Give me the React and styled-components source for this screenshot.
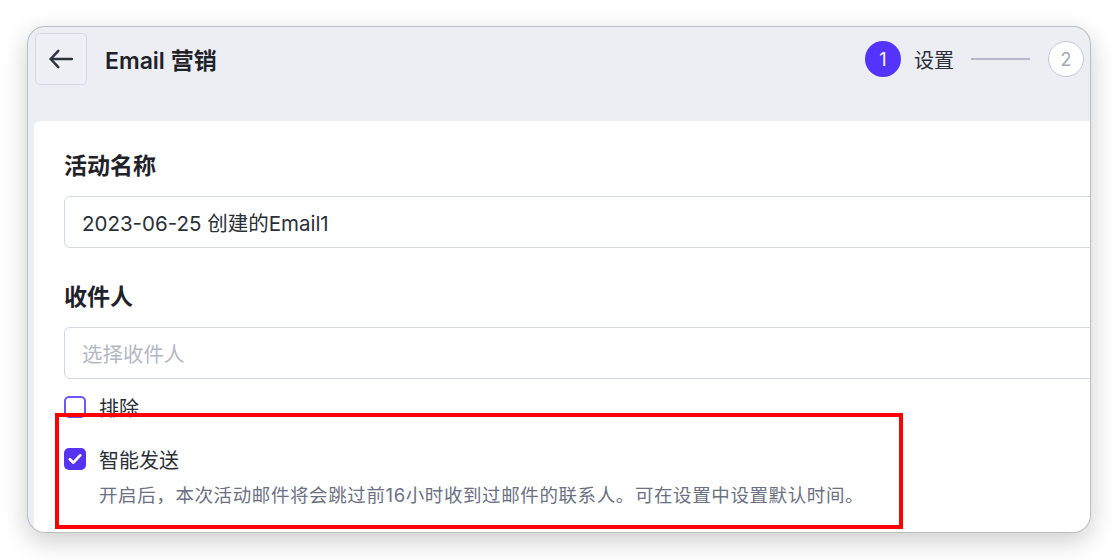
import React from 'react'
import styled, { createGlobalStyle } from 'styled-components'

const GlobalStyle = createGlobalStyle`
  html, body {
    margin: 0;
    padding: 0;
    background: #ffffff;
  }
  body {
    font-family: "Inter", "Noto Sans CJK SC", sans-serif;
    color: #1f2329;
  }
`

const Page = styled.div`
  position: relative;
  width: 1118px;
  height: 560px;
  padding: 26px 27px;
  box-sizing: border-box;
`

const Window = styled.div`
  width: 1064px;
  height: 507px;
  border-radius: 18px;
  overflow: hidden;
  background: #eceef3;
  border: 1px solid rgba(0, 0, 0, 0.2);
  box-sizing: border-box;
  box-shadow: 0 8px 26px rgba(0, 0, 0, 0.2);
  display: flex;
  flex-direction: column;
`

const Header = styled.header`
  height: 94px;
  flex-shrink: 0;
  display: flex;
  align-items: flex-start;
  padding: 6px 6px 0 7px;
  box-sizing: border-box;
`

const HeaderRow = styled.div`
  flex: 1;
  height: 52px;
  display: flex;
  align-items: center;
`

const BackButton = styled.button`
  width: 52px;
  height: 52px;
  border: 1px solid #d5d9e4;
  border-radius: 5px;
  background: #eef0f5;
  display: flex;
  align-items: center;
  justify-content: center;
  padding: 0;
  cursor: pointer;
`

const Title = styled.h1`
  margin: 0 0 0 18px;
  font-size: 23px;
  font-weight: 600;
  color: #1f2329;
  flex: 1;
`

const Steps = styled.div`
  display: flex;
  align-items: center;
`

const StepCircle = styled.div`
  width: 36px;
  height: 36px;
  border-radius: 50%;
  box-sizing: border-box;
  display: flex;
  align-items: center;
  justify-content: center;
  font-size: 18px;
  background: ${p => (p.$active ? '#5533ff' : '#ffffff')};
  color: ${p => (p.$active ? '#ffffff' : '#a3a8b8')};
  border: ${p => (p.$active ? 'none' : '1.5px solid #c3c7d4')};
`

const StepLabel = styled.span`
  margin-left: 13px;
  font-size: 20px;
  color: #2a2e36;
`

const StepLine = styled.div`
  width: 59px;
  height: 1.5px;
  background: #b6bac8;
  margin: 0 18px 0 17px;
`

const Card = styled.main`
  flex: 1;
  margin-left: 6px;
  width: 1100px;
  background: #ffffff;
  border-top-left-radius: 6px;
  padding: 30px 0 0 30px;
  box-sizing: border-box;
`

const Field = styled.div`
  margin-bottom: 34px;
`

const Label = styled.div`
  font-size: 23px;
  line-height: 30px;
  font-weight: 700;
  color: #1f2329;
  margin-bottom: 15px;
`

const Input = styled.div`
  height: 52px;
  border: 1px solid #d3d7e2;
  border-radius: 6px;
  box-sizing: border-box;
  display: flex;
  align-items: center;
  padding-left: 17px;
  font-size: 20.5px;
  color: ${p => (p.$placeholder ? '#b2b7c6' : '#2b2f38')};
`

const Fields = styled.div`
  & > ${Field}:last-child {
    margin-bottom: 0;
  }
`

const CheckRow = styled.label`
  display: flex;
  align-items: center;
  height: 30px;
  margin-top: ${p => p.$top}px;
  font-size: 20px;
  color: #2b2f38;
`

const Box = styled.span`
  width: 22px;
  height: 22px;
  border-radius: 5px;
  box-sizing: border-box;
  margin-right: 13px;
  display: flex;
  align-items: center;
  justify-content: center;
  background: ${p => (p.$checked ? '#5533f0' : '#ffffff')};
  border: ${p => (p.$checked ? 'none' : '2px solid #6f55ff')};
`

const Hint = styled.p`
  margin: 8px 0 0 35px;
  font-size: 18.5px;
  line-height: 26px;
  letter-spacing: 0.6px;
  color: #6b7182;
`

const Highlight = styled.div`
  position: absolute;
  left: 55px;
  top: 413px;
  width: 848px;
  height: 116px;
  border: 4px solid #ff0000;
  box-sizing: border-box;
  pointer-events: none;
`

const ArrowLeft = () => (
  <svg width="26" height="26" viewBox="0 0 24 24" fill="none" stroke="#2f333d" strokeWidth="2.3" strokeLinecap="round" strokeLinejoin="round">
    <path d="M22 12H2.5" />
    <path d="M9.5 4.5 2.5 12l7 7.5" />
  </svg>
)

const Check = () => (
  <svg width="16" height="16" viewBox="0 0 14 14" fill="none" stroke="#ffffff" strokeWidth="2.4" strokeLinecap="round" strokeLinejoin="round">
    <path d="M2.5 7.2 5.6 10.2 11.5 3.8" />
  </svg>
)

const App = () => (
  <>
    <GlobalStyle />
    <Page>
      <Window>
        <Header>
          <HeaderRow>
            <BackButton aria-label="返回"><ArrowLeft /></BackButton>
            <Title>Email 营销</Title>
            <Steps>
              <StepCircle $active>1</StepCircle>
              <StepLabel>设置</StepLabel>
              <StepLine />
              <StepCircle>2</StepCircle>
            </Steps>
          </HeaderRow>
        </Header>
        <Card>
          <Fields>
            <Field>
              <Label>活动名称</Label>
              <Input>2023-06-25 创建的Email1</Input>
            </Field>
            <Field>
              <Label>收件人</Label>
              <Input $placeholder>选择收件人</Input>
            </Field>
          </Fields>
          <CheckRow $top={13}>
            <Box />
            排除
          </CheckRow>
          <CheckRow $top={22}>
            <Box $checked><Check /></Box>
            智能发送
          </CheckRow>
          <Hint>开启后，本次活动邮件将会跳过前16小时收到过邮件的联系人。可在设置中设置默认时间。</Hint>
        </Card>
      </Window>
      <Highlight />
    </Page>
  </>
)

export default App
